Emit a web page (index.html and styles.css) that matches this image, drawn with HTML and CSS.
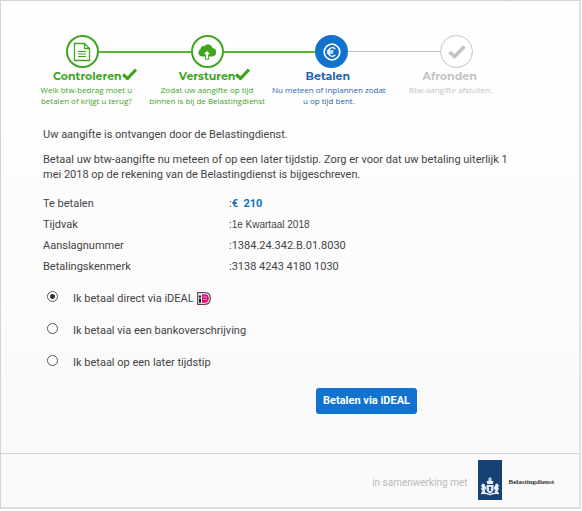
FILE: index.html
```html
<!doctype html>
<html lang="nl">
  <head>
    <meta charset="utf-8">
    <meta name="viewport" content="width=device-width, initial-scale=1">
    <title>Btw-aangifte betalen</title>
    <link rel="stylesheet" href="styles.css">
  </head>
  <body>
    <div class="page">
      <ol class="steps">
        <li class="step done">
          <div class="rail">
            <span class="circle">
              <svg width="18" height="20" viewBox="0 0 18 20" fill="none" stroke="currentColor">
                <path d="M1.5 1.5h10l5 5v12h-15z M11.5 1.5v5h5" stroke-width="1.3"/>
                <path d="M5 9.500h8M5 12h8M5 14.500h8" stroke-width="1.200"/>
              </svg>
            </span>
          </div>
          <h2>Controleren<svg class="tick" width="15" height="12" viewBox="0 0 15 12"><path d="M1 6.500 5.500 10.500 14 1.500" fill="none" stroke="currentColor" stroke-width="3.200"/></svg></h2>
          <p>Welk btw-bedrag moet u betalen of krijgt u terug?</p>
        </li>
        <li class="step done">
          <div class="rail">
            <span class="circle">
              <svg width="20" height="16" viewBox="0 0 20 16">
                <path d="M5 12.500a4 4 0 0 1-1.500-7.500 3.500 3.500 0 0 1 4-3 4.500 4.500 0 0 1 8 2 4.300 4.300 0 0 1 0 8.500z" fill="currentColor"/>
                <path d="M10 6.500 14 10.500h-2.400v4.700H8.400v-4.700H6z" fill="#fff" stroke="currentColor"/>
              </svg>
            </span>
          </div>
          <h2>Versturen<svg class="tick" width="15" height="12" viewBox="0 0 15 12"><path d="M1 6.500 5.500 10.500 14 1.500" fill="none" stroke="currentColor" stroke-width="3.200"/></svg></h2>
          <p>Zodat uw aangifte op tijd binnen is bij de Belastingdienst</p>
        </li>
        <li class="step current">
          <div class="rail">
            <span class="circle">
              <svg width="18" height="18" viewBox="0 0 18 18" fill="none" stroke="#fff">
                <circle cx="9" cy="9" r="7.800" stroke-width="1.700"/>
                <path d="M12.300 5.900a4.200 4.200 0 1 0 0 6.200M4 8h6.500M4 10h6" stroke-width="1.400"/>
              </svg>
            </span>
          </div>
          <h2>Betalen</h2>
          <p>Nu meteen of inplannen zodat u op tijd bent.</p>
        </li>
        <li class="step todo">
          <div class="rail">
            <span class="circle">
              <svg width="18" height="14" viewBox="0 0 18 14"><path d="M1.500 7 6.500 11.500 16.500 1.500" fill="none" stroke="currentColor" stroke-width="3.600"/></svg>
            </span>
          </div>
          <h2>Afronden</h2>
          <p>Btw-aangifte afsluiten.</p>
        </li>
      </ol>

      <main class="content">
        <p>Uw aangifte is ontvangen door de Belastingdienst.</p>
        <p>Betaal uw btw-aangifte nu meteen of op een later tijdstip. Zorg er voor dat uw betaling uiterlijk 1 mei 2018 op de rekening van de Belastingdienst is bijgeschreven.</p>

        <table class="details">
          <tr><th scope="row">Te betalen</th><td>:<strong>€&nbsp; 210</strong></td></tr>
          <tr><th scope="row">Tijdvak</th><td>:<span class="period">1e Kwartaal 2018</span></td></tr>
          <tr><th scope="row">Aanslagnummer</th><td>:1384.24.342.B.01.8030</td></tr>
          <tr><th scope="row">Betalingskenmerk</th><td>:3138 4243 4180 1030</td></tr>
        </table>

        <form class="payment">
          <div class="option">
            <input type="radio" name="betaling" id="ideal" checked>
            <label for="ideal">Ik betaal direct via iDEAL
              <svg class="ideal" width="14" height="13" viewBox="0 0 14 13">
                <path d="M.7.700h7.300c3.500 0 5.300 2.300 5.300 5.800s-1.800 5.800-5.300 5.800H.7z" fill="#fff" stroke="#64434f" stroke-width="1.200"/>
                <path d="M5 2.200h3c2.600 0 3.900 1.700 3.900 4.300S10.600 10.800 8 10.800H5z" fill="#d5147f"/>
                <circle cx="3" cy="4.500" r="1.200" fill="#222"/>
                <path d="M2 6.500h2v4.300H2z" fill="#222"/>
                <path d="M6 5h4M6 7.500h4" stroke="#f3b5d5" stroke-width=".8"/>
              </svg>
            </label>
          </div>
          <div class="option">
            <input type="radio" name="betaling" id="bank">
            <label for="bank">Ik betaal via een bankoverschrijving</label>
          </div>
          <div class="option">
            <input type="radio" name="betaling" id="later">
            <label for="later">Ik betaal op een later tijdstip</label>
          </div>
          <button type="submit">Betalen via iDEAL</button>
        </form>
      </main>

      <footer class="footer">
        <span class="partner">in samenwerking met</span>
        <svg class="crest" width="24" height="40" viewBox="0 0 24 40">
          <path d="M0 0h24v40H0z" fill="#154273"/>
          <g fill="#e6edf5">
            <path d="M11.500 17h1v1.500H14v1h-1.500V21h-1v-1.500H10v-1h1.500z"/>
            <path d="M8.500 21.500q3.500-2.500 7 0l-.8 2.500H9.300z"/>
            <path d="M8.500 25h7v5q-1 2.800-3.500 3.600-2.500-.8-3.500-3.600z"/>
            <path d="M7.500 32 6 33H3.500l1-2-1.500-2 1-1.500L3 26l1.500-2.500 2 .5.500 2 1 1v2l-1.500 1z"/>
            <path d="M16.500 32l1.500 1h2.500l-1-2 1.500-2-1-1.500L21 26l-1.500-2.500-2 .5-.5 2-1 1v2l1.500 1z"/>
          </g>
          <path d="M10.500 27.500 12 26.500l1.500 1-1 1.500 1 2h-3l1-1.500z" fill="#154273"/>
          <path d="M3 33.500q4.500-.8 9 1.200 4.500-2 9-1.200" fill="none" stroke="#e6edf5" stroke-width="1.300"/>
        </svg>
        <span class="brand">Belastingdienst</span>
      </footer>
    </div>
  </body>
</html>
```
FILE: styles.css
```css
* { box-sizing: border-box; }
body {
  margin: 0;
  padding: 0 1px 1px 0;
  background-color: #fff;
  color: #444;
  font: 11px/15px Roboto, "Liberation Sans", sans-serif;
}
h2, p, ol { margin: 0; padding: 0; }

.page {
  border: 1px solid #d4d4d4;
  border-right: 2px solid #e2e2e2;
  border-bottom: 2px solid #dedede;
  background: linear-gradient(#fff, #fafafa 75%);
}

/* Progress */
.steps {
  display: grid;
  grid-template-columns: repeat(4, 1fr);
  padding: 34px 60px 0 19px;
  list-style: none;
}
.step { text-align: center; }
.rail {
  display: flex;
  align-items: center;
}
.rail::before, .rail::after {
  content: "";
  flex: 1;
  height: 2px;
  background-color: #5cb531;
}
.step:first-child .rail::before, .step:last-child .rail::after { background: none; }
.current .rail::after, .todo .rail::before {
  height: 1px;
  background-color: #bdbdbd;
}
.circle {
  display: flex;
  align-items: center;
  justify-content: center;
  width: 33px;
  height: 33px;
  border: 2px solid;
  border-radius: 50%;
  background-color: #fff;
}
.step h2 {
  display: flex;
  justify-content: center;
  font: bold 11px/16px Montserrat, "Open Sans", sans-serif;
}
.step p {
  padding: 0 2px;
  font: 8px/11px "Open Sans", "Noto Sans", sans-serif;
}
/* the outer captions lean towards the middle */
.step:first-child h2, .step:first-child p { padding-left: 10px; }
.step:last-child h2, .step:last-child p { padding-right: 14px; }
.done { color: #3fa51f; }
.current { color: #1e64b4; }
.current h2, .current p { padding-right: 8px; }
.current .circle {
  border-color: #1273cf;
  background-color: #1273cf;
}
.todo { color: #c4c4c4; }
.todo .circle { border-width: 1px; }
.tick { margin-right: -15px; }

/* Text */
.content { padding: 21px 68px 39px 42px; }
.content p { margin-bottom: 10px; }

.details {
  width: 100%;
  margin-top: 11px;
  border-collapse: collapse;
}
.details th, .details td {
  height: 21px;
  padding: 0;
  font-weight: normal;
  text-align: left;
}
.details th { width: 186px; }
.details strong { color: #1273b9; }
.period {
  font-family: "Liberation Sans", Arial, sans-serif;
  font-size: 10px;
}

/* Payment */
.payment {
  display: flex;
  flex-direction: column;
  padding-top: 5px;
}
.option {
  display: flex;
  align-items: center;
  gap: 15px;
  height: 32px;
  padding-left: 4px;
}
.option label {
  display: flex;
  align-items: center;
  gap: 3px;
}
.option input {
  appearance: none;
  width: 11px;
  height: 11px;
  margin: 0 0 4px;
  border: 1px solid #555;
  border-radius: 50%;
  background-color: #fff;
}
.option input:checked { background: radial-gradient(circle, #333 2px, #fff 3px); }
.payment button {
  align-self: flex-end;
  height: 26px;
  margin: 10px 94px 0 0;
  padding: 0 7px;
  border: 0;
  border-radius: 3px;
  background-color: #1273cf;
  color: #fff;
  font: bold 11px/26px Roboto, sans-serif;
}

/* Footer */
.footer {
  display: flex;
  align-items: center;
  justify-content: flex-end;
  height: 54px;
  padding: 0 25px 2px 0;
  border-top: 1px solid #d6d6d6;
}
.partner {
  margin-right: 11px;
  padding-top: 5px;
  color: #bbb;
  font-size: 10px;
}
.crest { margin-right: 6px; }
.brand {
  padding-top: 4px;
  color: #333;
  font: bold 7px/10px "Liberation Serif", serif;
}
```
